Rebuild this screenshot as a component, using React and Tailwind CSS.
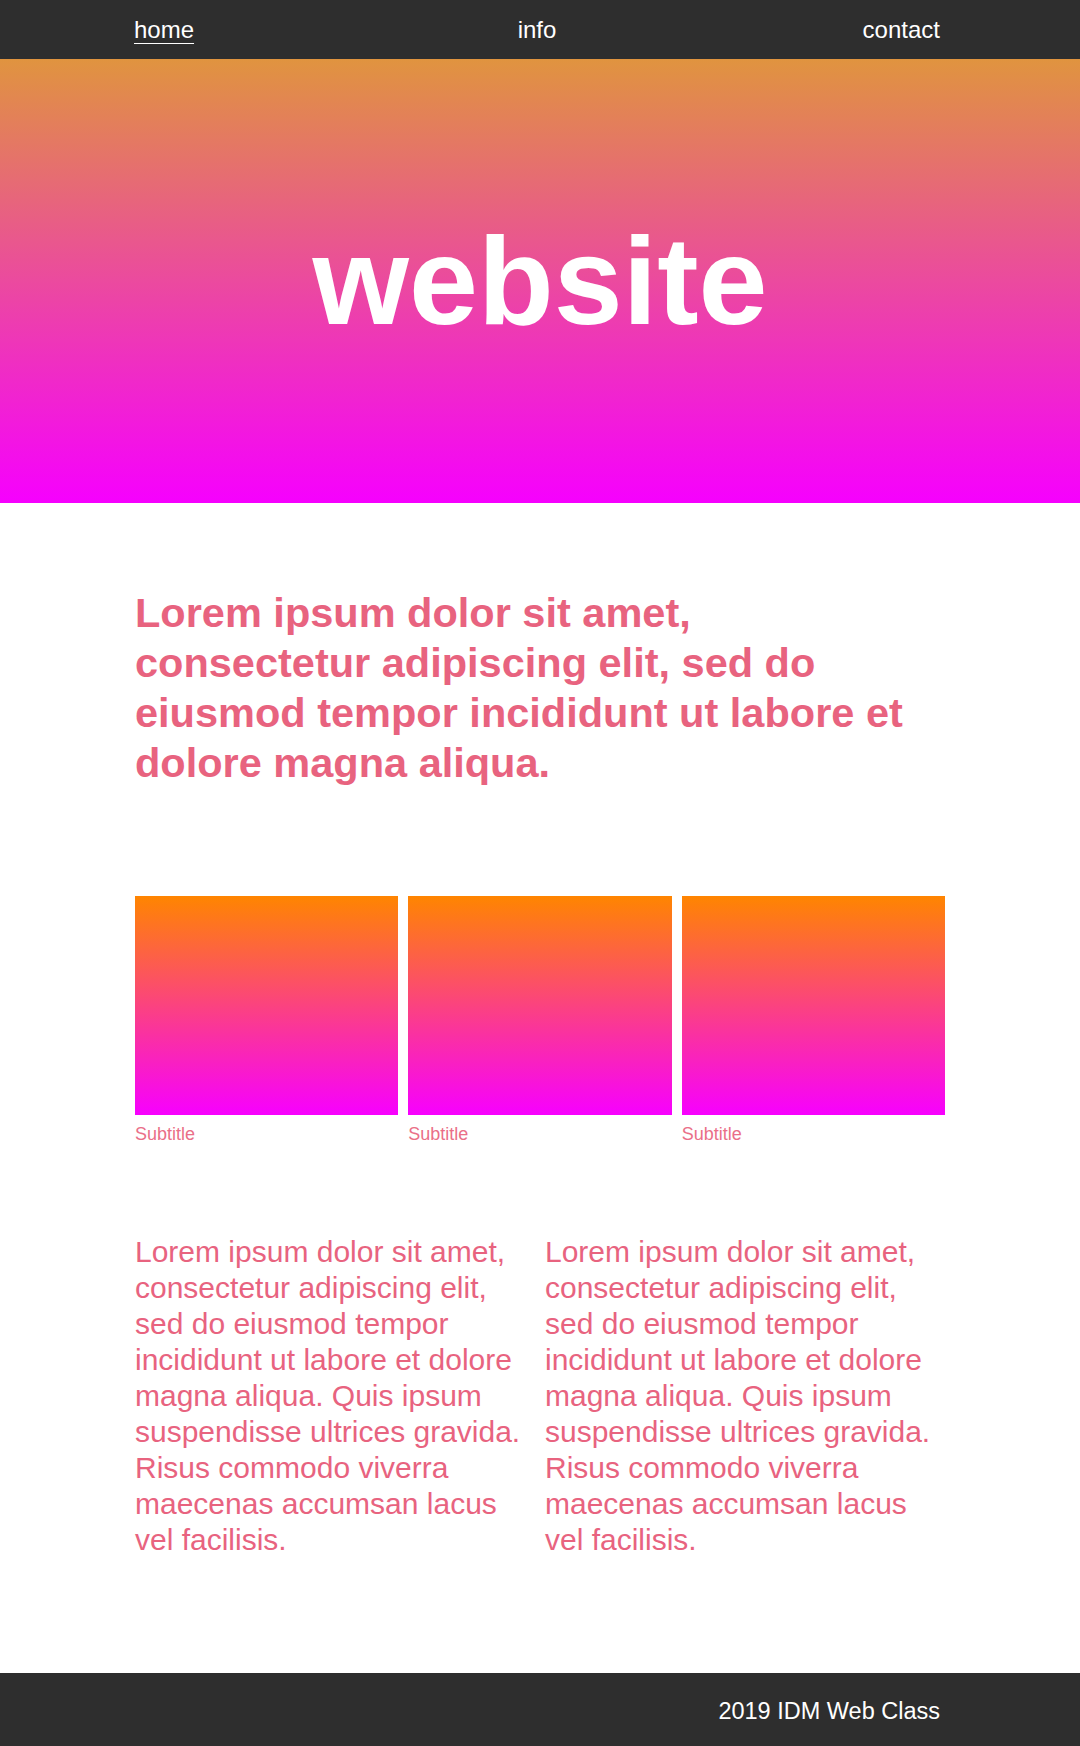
import React from "react";

const body =
  "Lorem ipsum dolor sit amet, consectetur adipiscing elit, sed do eiusmod tempor incididunt ut labore et dolore magna aliqua. Quis ipsum suspendisse ultrices gravida. Risus commodo viverra maecenas accumsan lacus vel facilisis.";

export default function App() {
  return (
    <div className="w-[1080px] bg-white font-['Liberation_Sans',Arial,sans-serif]">
      <nav className="h-[59px] bg-[#2e2e2e] grid grid-cols-3 items-center pl-[134px] pr-[140px] text-[24px] leading-[34px] text-white">
        <a className="justify-self-start underline decoration-1 underline-offset-[5px]">home</a>
        <a className="justify-self-center">info</a>
        <a className="justify-self-end">contact</a>
      </nav>

      <header className="h-[444px] flex items-center justify-center bg-[linear-gradient(to_bottom,#e0943f,#f600fe)]">
        <h1 className="text-[124px] leading-none font-bold text-white">website</h1>
      </header>

      <main className="w-[810px] mx-auto">
        <h2 className="mt-[85px] w-[795px] text-[41.5px] leading-[50px] font-bold text-[#e8637f]">
          Lorem ipsum dolor sit amet, consectetur adipiscing elit, sed do eiusmod tempor incididunt ut labore et dolore magna aliqua.
        </h2>

        <div className="mt-[108px] grid grid-cols-3 gap-[10px]">
          {[0, 1, 2].map((i) => (
            <div key={i}>
              <div className="h-[219px] bg-[linear-gradient(to_bottom,#ff8500,#f700ff)]" />
              <p className="mt-[7px] text-[18px] leading-[24px] text-[#ea6f88]">Subtitle</p>
            </div>
          ))}
        </div>

        <div className="mt-[88px] mb-[115px] grid grid-cols-2 gap-[10px] text-[30px] leading-[36px] text-[#e8637f]">
          <p>{body}</p>
          <p>{body}</p>
        </div>
      </main>

      <footer className="h-[73px] bg-[#2e2e2e] pt-[22px] pr-[140px] text-right text-[23.5px] leading-[33px] text-white">
        2019 IDM Web Class
      </footer>
    </div>
  );
}
